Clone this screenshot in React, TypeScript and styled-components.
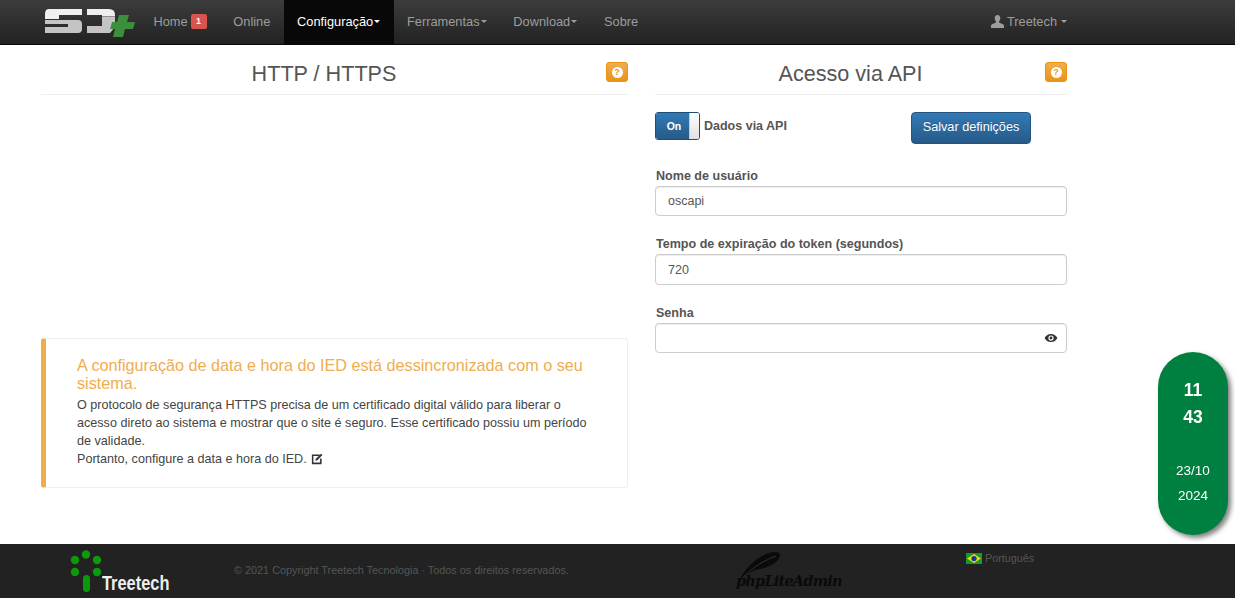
import React from "react";
import styled, { createGlobalStyle } from "styled-components";

const Global = createGlobalStyle`
  html, body { margin: 0; padding: 0; height: 100%; overflow: hidden; background: #fff; }
  body { font-family: "Liberation Sans", Arial, sans-serif; font-size: 13px; color: #555; }
  * { box-sizing: border-box; }
`;
const Page = styled.div`display: flex; flex-direction: column; height: 598px;`;
const Navbar = styled.nav`
  height: 45px; flex: none; display: flex; align-items: stretch; padding-left: 44px; padding-right: 168px;
  background: linear-gradient(to bottom, #3c3c3c 0%, #222 100%);
  border-bottom: 1px solid #080808;
`;
const Brand = styled.div`width: 96px; flex: none; padding-top: 9px; svg { display: block; }`;
const NavItem = styled.a<{ $active?: boolean }>`
  display: flex; align-items: center; gap: 4px; padding: 0 13.4px 2px; font-size: 12.8px; white-space: nowrap;
  color: ${p => (p.$active ? "#fff" : "#9d9d9d")};
  background: ${p => (p.$active ? "#080808" : "transparent")};
`;
const HomeItem = styled(NavItem)`gap: 3px;`;
const Caret = styled.span`
  display: inline-block; width: 0; height: 0; margin-left: -3px; margin-top: 1px;
  border-top: 3px solid currentColor; border-left: 3.5px solid transparent; border-right: 3.5px solid transparent;
`;
const Badge = styled.span`
  background: #d9534f; color: #fff; font-size: 9px; font-weight: bold; line-height: 15px; height: 15px; width: 16px;
  text-align: center; border-radius: 2px;
`;
const UserMenu = styled(NavItem)`margin-left: auto; padding-right: 0; gap: 3px;`;
const UserCaret = styled(Caret)`margin-left: 1px;`;
const Main = styled.main`
  flex: 1; display: grid; grid-template-columns: 587px 412px; column-gap: 27px; padding: 0 0 0 41px;
`;
const Column = styled.section`display: flex; flex-direction: column;`;
const HeadRow = styled.header`
  position: relative; height: 50px; border-bottom: 1px solid #eee; display: flex; align-items: center; justify-content: center;
  padding: 8px 21px 0 0;
`;
const Title = styled.h2`margin: 0; font-size: 21.6px; font-weight: normal; color: #555;`;
const HelpButton = styled.button`
  position: absolute; right: 0; top: 17px; width: 22px; height: 20px; padding: 0; border: 1px solid #eb9316; border-radius: 3px;
  background: linear-gradient(to bottom, #f0ad4e, #eb9316); display: flex; align-items: center; justify-content: center;
`;
const HelpDot = styled.span`
  width: 11px; height: 11px; border-radius: 50%; background: #fff; color: #eb9316; font-size: 9px; font-weight: bold;
  line-height: 11px; text-align: center;
`;
const Alert = styled.div`
  margin-top: 243px; height: 150px; padding: 17px 30px 0 31px; border: 1px solid #eee; border-left: 5px solid #f0ad4e; border-radius: 3px;
`;
const AlertTitle = styled.h4`margin: 0 0 4px; font-size: 16.2px; line-height: 18px; font-weight: normal; color: #f0ad4e;`;
const AlertText = styled.p`margin: 0; font-size: 12.6px; line-height: 18px; color: #444;`;
const EditIcon = styled.svg`vertical-align: -2px; margin-left: 1px;`;
const TopRow = styled.div`display: flex; align-items: flex-start; padding-top: 17px;`;
const Toggle = styled.div`
  width: 45px; height: 28px; display: flex; border: 1px solid #204d74; border-radius: 3px; overflow: hidden; flex: none;
`;
const ToggleOn = styled.span`
  width: 33px; padding-left: 3px; background: linear-gradient(to bottom, #337ab7, #265a88); color: #fff; font-size: 10.5px; font-weight: bold;
  text-align: center; line-height: 26px;
`;
const ToggleKnob = styled.span`flex: 1; background: linear-gradient(to bottom, #fff, #e0e0e0); border-left: 1px solid #ccc;`;
const ToggleLabel = styled.span`margin: 7px 0 0 4px; font-weight: bold; font-size: 12.5px; width: 207px; color: #555;`;
const SaveButton = styled.button`
  width: 120px; height: 32px; padding: 0 0 3px; border: 1px solid #245580; border-radius: 4px; color: #fff; font: 12.7px "Liberation Sans", Arial, sans-serif;
  background: linear-gradient(to bottom, #337ab7, #265a88); text-shadow: 0 -1px 0 rgba(0,0,0,.2);
`;
const Field = styled.div<{ $top: number }>`
  margin-top: ${p => p.$top}px; position: relative;
  label { display: block; font-weight: bold; font-size: 12.55px; line-height: 15px; margin-bottom: 2px; color: #555; padding-left: 1px; }
`;
const Input = styled.input<{ $tall?: boolean }>`
  display: block; width: 100%; height: ${p => (p.$tall ? 31 : 30)}px; border: 1px solid #ccc; border-radius: 4px; padding: 0 12px; color: #555;
  font: 12.5px "Liberation Sans", Arial, sans-serif; background: #fff; box-shadow: inset 0 1px 1px rgba(0,0,0,.075); outline: none;
`;
const Eye = styled.span`position: absolute; right: 9px; bottom: 8px; color: #333; display: flex;`;
const Clock = styled.aside`
  position: fixed; left: 1158px; top: 352px; width: 70px; height: 183px; border-radius: 35px; background: #008040; color: #fff;
  box-shadow: 3px 3px 5px rgba(0,0,0,.5); display: flex; flex-direction: column; align-items: center; padding-top: 25px;
`;
const ClockBig = styled.div`font-size: 17.5px; font-weight: bold; line-height: 26.5px;`;
const ClockSmall = styled.div`font-size: 13.5px; line-height: 25px; &:nth-child(3) { margin-top: 28px; }`;
const Footer = styled.footer`
  height: 54px; flex: none; background: #222; display: flex; align-items: flex-start; color: #555; font-size: 10px; position: relative;
`;
const TreeLogo = styled.div`width: 234px; padding: 6px 0 0 70px; flex: none; display: flex;`;
const TreeName = styled.span`
  color: #eee; font: bold 20px "Liberation Sans", Arial, sans-serif; display: inline-block; transform: scaleX(.82); transform-origin: left;
  margin: 21px 0 0 0; white-space: nowrap; line-height: 24px;
`;
const Copy = styled.div`width: 500px; padding-top: 20px; flex: none; font-size: 10.85px;`;
const PhpLogo = styled.div`width: 232px; flex: none; position: relative; height: 54px; padding-top: 7px; svg { display: block; margin-left: 2px; }`;
const PhpName = styled.span`
  position: absolute; left: 2px; top: 28px; color: #0a0a0a; font: italic bold 14.5px "DejaVu Serif", serif; white-space: nowrap; letter-spacing: -.8px;
`;
const Lang = styled.div`display: flex; align-items: center; gap: 3px; padding-top: 8px; font-size: 10.8px;`;

export default function App() {
  return (
    <Page>
      <Global />
      <Navbar>
        <Brand>
          <svg width="92" height="30" viewBox="0 0 92 30">
            <path d="M1 11H34Q38 11 38 15V20Q38 24 34 24H1V18H24V15H1Z" fill="#c4c4c4" />
            <path d="M5 0H38V6H15V10H1V5Q1 0 5 0Z" fill="#efefef" />
            <path d="M58 8H71V18L66 24H43V17H58Z" fill="#c4c4c4" />
            <path d="M43 0H65Q71 0 71 6V7.500H58V6H43Z" fill="#efefef" />
            <path d="M75 6H85L83 13H91L89 20H81L79 28H69L71 20H66L68 13H73Z" fill="#3c8f3c" />
          </svg>
        </Brand>
        <HomeItem>Home <Badge>1</Badge></HomeItem>
        <NavItem>Online</NavItem>
        <NavItem $active>Configuração<Caret /></NavItem>
        <NavItem>Ferramentas<Caret /></NavItem>
        <NavItem>Download<Caret /></NavItem>
        <NavItem>Sobre</NavItem>
        <UserMenu>
          <svg width="13" height="13" viewBox="0 0 13 13"><path d="M6.500 0C4.600 0 3.700 1.500 3.700 3.300c0 1.300.6 2.500 1.300 3.200v1.100L1 9.300C.3 9.700 0 10.300 0 11v2h13v-2c0-.7-.3-1.300-1-1.700L8 7.600V6.500c.7-.7 1.300-1.900 1.300-3.200C9.300 1.500 8.400 0 6.500 0z" fill="#9d9d9d" /></svg>
          Treetech <UserCaret />
        </UserMenu>
      </Navbar>
      <Main>
        <Column>
          <HeadRow>
            <Title>HTTP / HTTPS</Title>
            <HelpButton aria-label="ajuda"><HelpDot>?</HelpDot></HelpButton>
          </HeadRow>
          <Alert>
            <AlertTitle>A configuração de data e hora do IED está dessincronizada com o seu sistema.</AlertTitle>
            <AlertText>
              O protocolo de segurança HTTPS precisa de um certificado digital válido para liberar o acesso direto ao sistema e mostrar que o site é seguro. Esse certificado possiu um período de validade.<br />
              Portanto, configure a data e hora do IED.{" "}
              <EditIcon width="12" height="12" viewBox="0 0 11 11">
                <path d="M8 2H1.500V9.500H9V5" fill="none" stroke="#333" strokeWidth="1.400" />
                <path d="M4 7.200L4.400 5.300 9.200.6 10.500 1.900 5.800 6.700Z" fill="#333" />
              </EditIcon>
            </AlertText>
          </Alert>
        </Column>
        <Column>
          <HeadRow>
            <Title>Acesso via API</Title>
            <HelpButton aria-label="ajuda"><HelpDot>?</HelpDot></HelpButton>
          </HeadRow>
          <TopRow>
            <Toggle><ToggleOn>On</ToggleOn><ToggleKnob /></Toggle>
            <ToggleLabel>Dados via API</ToggleLabel>
            <SaveButton>Salvar definições</SaveButton>
          </TopRow>
          <Field $top={25}><label>Nome de usuário</label><Input defaultValue="oscapi" /></Field>
          <Field $top={21}><label>Tempo de expiração do token (segundos)</label><Input $tall defaultValue="720" /></Field>
          <Field $top={21}>
            <label>Senha</label><Input />
            <Eye>
              <svg width="14" height="14" viewBox="0 0 24 24"><path d="M12 5C7 5 2.700 8.100 1 12c1.700 3.900 6 7 11 7s9.300-3.100 11-7c-1.700-3.900-6-7-11-7zm0 11.500a4.500 4.500 0 1 1 0-9 4.500 4.500 0 0 1 0 9zm0-7a2.500 2.500 0 1 0 0 5 2.500 2.500 0 0 0 0-5z" fill="#333" /></svg>
            </Eye>
          </Field>
        </Column>
      </Main>
      <Footer>
        <TreeLogo>
          <svg width="32" height="48" viewBox="0 0 32 48" style={{ flex: "none" }}>
            <g fill="#0a9a0a">
              <circle cx="5" cy="10" r="4.200" /><circle cx="16" cy="4.500" r="4.200" /><circle cx="27" cy="10" r="4.200" />
              <circle cx="5" cy="22" r="4.200" /><circle cx="27" cy="22" r="4.200" />
              <rect x="13" y="25" width="7" height="17" rx="3.500" />
            </g>
          </svg>
          <TreeName>Treetech</TreeName>
        </TreeLogo>
        <Copy>© 2021 Copyright Treetech Tecnologia · Todos os direitos reservados.</Copy>
        <PhpLogo>
          <svg width="50" height="36" viewBox="0 0 50 36">
            <path d="M3 30C8 20 16 9 30 3C38 0 45 0 44 5C42 12 33 16 24 18C17 19 10 23 6 28L3 34Z" fill="#0a0a0a" />
            <path d="M5 29C12 20 24 11 40 5" stroke="#444" strokeWidth="0.700" fill="none" />
          </svg>
          <PhpName>phpLiteAdmin</PhpName>
        </PhpLogo>
        <Lang>
          <svg width="16" height="11" viewBox="0 0 16 11"><rect width="16" height="11" fill="#129b2e" /><path d="M8 1L15 5.500 8 10 1 5.500Z" fill="#f2d600" /><circle cx="8" cy="5.500" r="2.600" fill="#1c2fa8" /></svg>
          Português
        </Lang>
      </Footer>
      <Clock>
        <ClockBig>11</ClockBig>
        <ClockBig>43</ClockBig>
        <ClockSmall>23/10</ClockSmall>
        <ClockSmall>2024</ClockSmall>
      </Clock>
    </Page>
  );
}
